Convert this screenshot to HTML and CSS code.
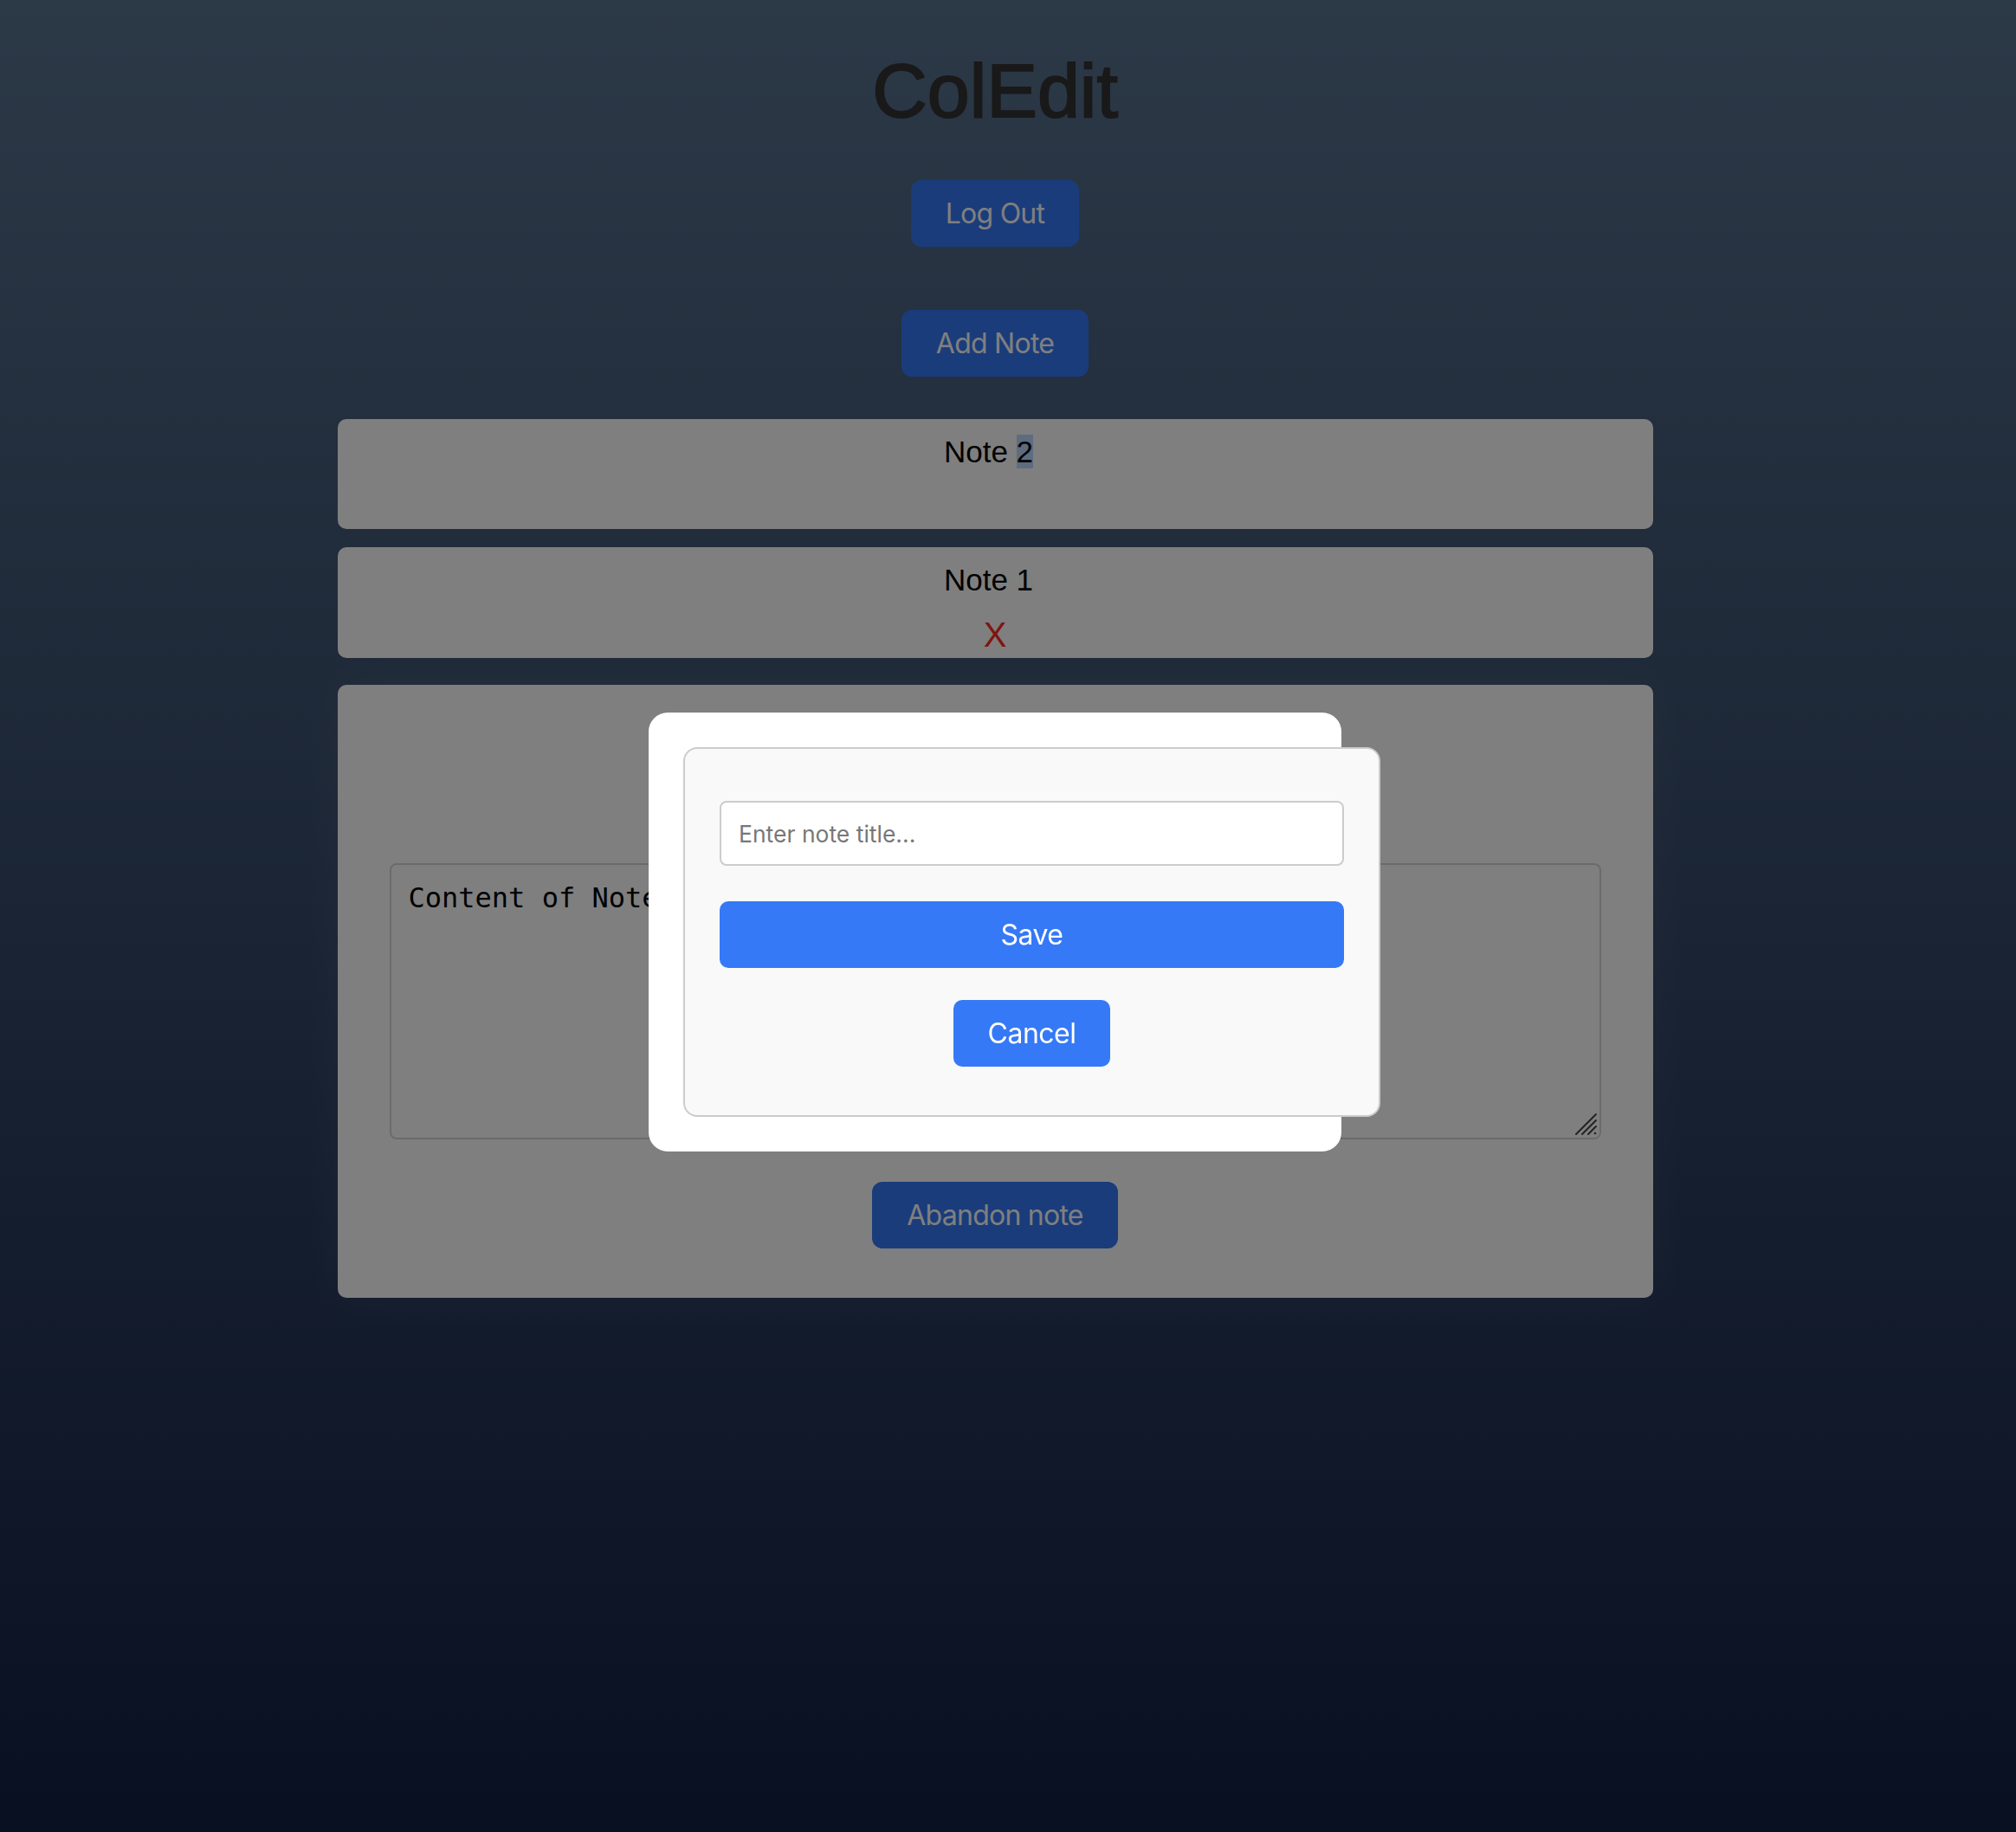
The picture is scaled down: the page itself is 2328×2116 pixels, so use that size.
FILE: index.html
```html
<!DOCTYPE html>
<html lang="en">
<head>
<meta charset="utf-8">
<title>ColEdit</title>
<link rel="stylesheet" href="styles.css">
</head>
<body>
<div class="page">
  <h1 class="app-title">ColEdit</h1>
  <button class="btn btn-logout">Log Out</button>
  <button class="btn btn-add">Add Note</button>

  <div class="note-card note-first">
    <div class="note-title">Note <span class="selected">2</span></div>
    <div class="note-delete note-delete-hidden">X</div>
  </div>

  <div class="note-card note-second">
    <div class="note-title">Note 1</div>
    <div class="note-delete">X</div>
  </div>

  <div class="editor-card">
    <div class="editor-wrap">
      <textarea class="editor-text">Content of Note 1</textarea>
      <svg class="resize-grip" width="28" height="28" viewBox="0 0 28 28" aria-hidden="true">
        <line x1="3" y1="26" x2="26" y2="3" stroke="#444" stroke-width="2" stroke-linecap="round"/>
        <line x1="10" y1="26" x2="26" y2="10" stroke="#444" stroke-width="2" stroke-linecap="round"/>
        <line x1="17" y1="26" x2="26" y2="17" stroke="#444" stroke-width="2" stroke-linecap="round"/>
        <circle cx="25" cy="25" r="1.3" fill="#444"/>
      </svg>
    </div>
    <button class="btn btn-abandon">Abandon note</button>
  </div>
</div>

<div class="overlay">
  <div class="modal">
    <div class="modal-box">
      <input class="title-input" type="text" placeholder="Enter note title...">
      <button class="btn-modal btn-save">Save</button>
      <button class="btn-modal btn-cancel">Cancel</button>
    </div>
  </div>
</div>
</body>
</html>
```

FILE: styles.css
```css
* { box-sizing: border-box; }

html, body {
  margin: 0;
  padding: 0;
  min-height: 100%;
}

body {
  min-height: 2116px;
  background: linear-gradient(to bottom, #58728e 0%, #122044 100%);
  font-family: "Liberation Sans", Arial, Helvetica, sans-serif;
  color: #000;
}

.page {
  padding-right: 30px;
  display: flex;
  flex-direction: column;
  align-items: center;
}

.app-title {
  margin: 54px 0 0;
  font-size: 88px;
  font-weight: normal;
  line-height: 101px;
  color: #333;
  font-family: "Liberation Sans", Arial, sans-serif;
  -webkit-text-stroke: 2px #333;
}

.btn {
  font-family: Inter, "Open Sans", sans-serif;
  font-size: 32px;
  line-height: 37px;
  padding: 20px 40px;
  border: none;
  border-radius: 12px;
  background: #3579f6;
  color: #fff;
  letter-spacing: -0.75px;
}

.btn-logout { margin-top: 53px; }
.btn-add { margin-top: 73px; }

.note-card {
  width: 1519px;
  background: #fff;
  border-radius: 10px;
  display: flex;
  flex-direction: column;
  align-items: center;
  padding: 18px 0 4px;
  height: 127px;
}

.note-first { margin-top: 49px; }
.note-second { margin-top: 21px; height: 128px; }

.note-title {
  font-size: 35px;
  line-height: 40px;
  padding-right: 15px;
}

.selected {
  background: #bcd9ff;
}

.note-delete {
  margin-top: 20px;
  font-size: 40px;
  line-height: 46px;
  color: #ff2a1f;
}

.note-delete-hidden { visibility: hidden; }

.editor-card {
  margin-top: 31px;
  width: 1519px;
  background: #fff;
  border-radius: 10px;
  padding: 206px 60px 57px;
  display: flex;
  flex-direction: column;
  align-items: center;
  box-shadow: 0 0 50px rgba(255, 255, 255, 0.07);
}

.editor-wrap {
  position: relative;
  width: 100%;
  height: 319px;
}

.editor-text {
  display: block;
  width: 100%;
  height: 319px;
  border: 2px solid #d6d6d6;
  border-radius: 8px;
  padding: 20px;
  font-family: "DejaVu Sans Mono", "Liberation Mono", monospace;
  font-size: 32px;
  line-height: 37px;
  color: #000;
  background: #fff;
  resize: none;
}

.resize-grip {
  position: absolute;
  right: 4px;
  bottom: 4px;
}

.btn-abandon { margin-top: 49px; }

.overlay {
  position: fixed;
  inset: 0;
  background: rgba(0, 0, 0, 0.5);
  display: flex;
  justify-content: center;
  align-items: flex-start;
  padding: 823px 30px 0 0;
}

.modal {
  width: 800px;
  background: #fff;
  border-radius: 22px;
  padding: 40px;
}

.modal-box {
  box-sizing: content-box;
  width: 721px;
  padding: 40px;
  border: 2px solid #cccccc;
  border-radius: 16px;
  background: #f9f9f9;
  display: flex;
  flex-direction: column;
  align-items: center;
}

.title-input {
  margin-top: 20px;
  width: 100%;
  height: 75px;
  border: 2px solid #cccccc;
  border-radius: 8px;
  padding: 0 20px;
  font-family: Inter, "Open Sans", sans-serif;
  font-size: 26.5px;
  background: #fff;
  color: #000;
}

.title-input::placeholder { color: #777; }

.btn-modal {
  font-family: Inter, "Open Sans", sans-serif;
  font-size: 32px;
  line-height: 37px;
  padding: 20px 40px;
  border: none;
  border-radius: 10px;
  background: #3579f6;
  color: #fff;
  letter-spacing: -0.5px;
}

.btn-save {
  margin-top: 41px;
  width: 100%;
}

.btn-cancel {
  margin-top: 37px;
  margin-bottom: 16px;
}
```
